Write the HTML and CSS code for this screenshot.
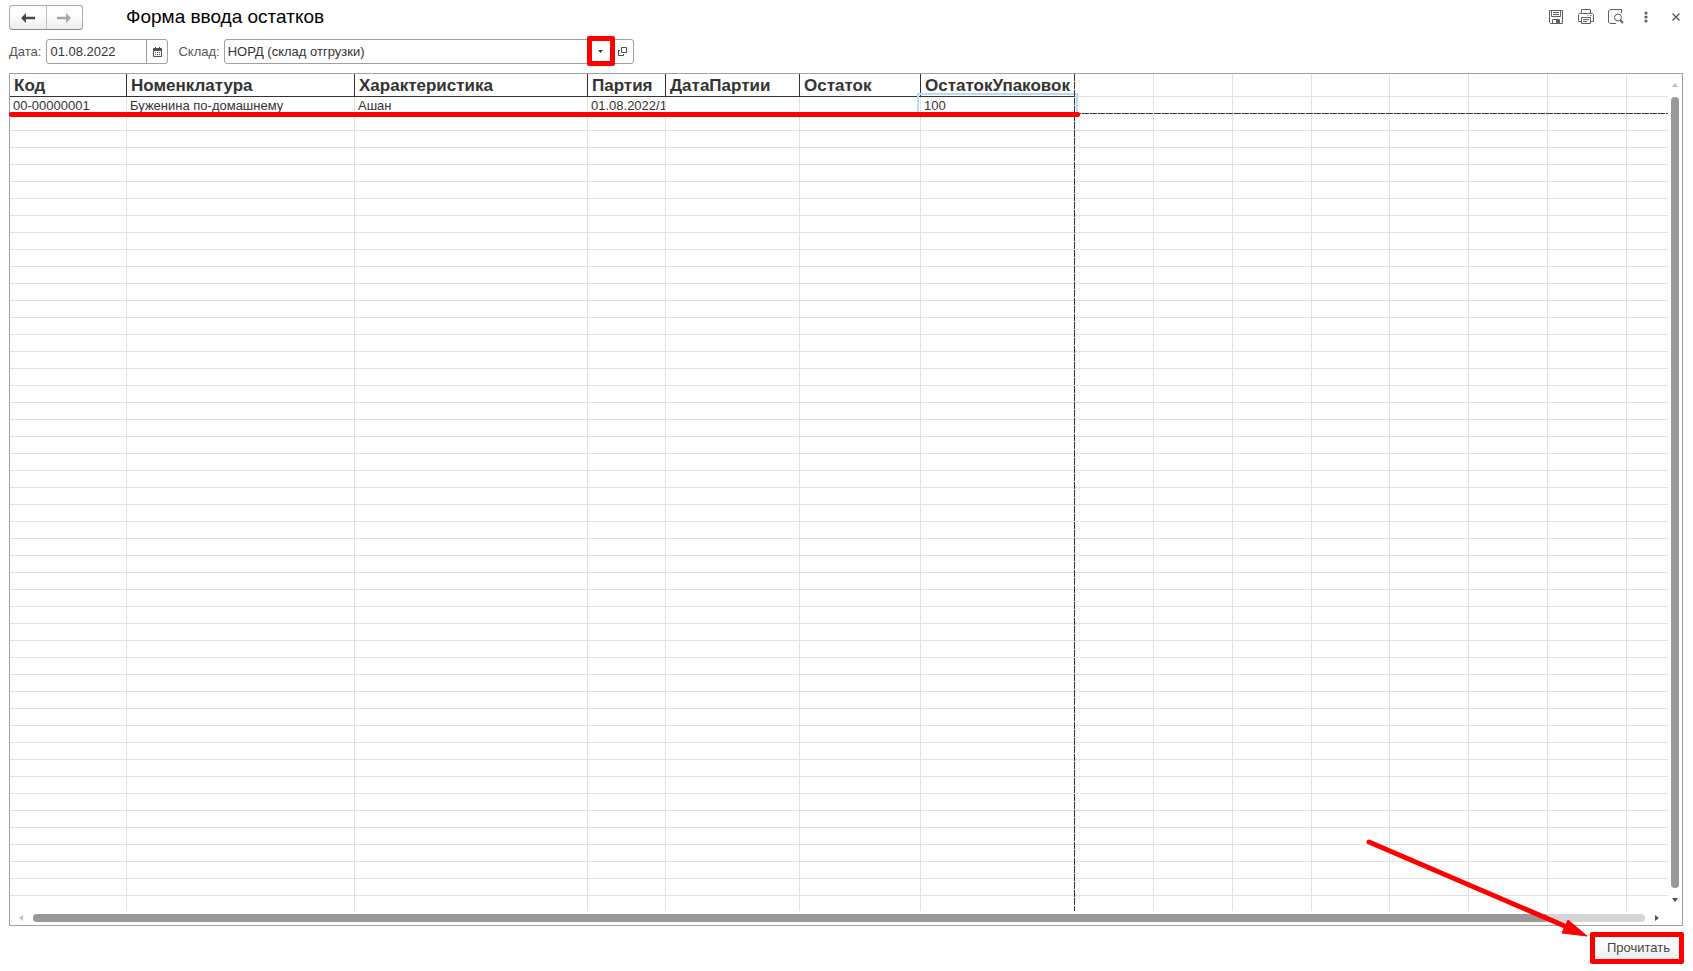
FILE: index.html
```html
<!DOCTYPE html>
<html lang="ru">
<head>
<meta charset="utf-8">
<title>Форма ввода остатков</title>
<link rel="stylesheet" href="styles.css">
</head>
<body>
<header class="titlebar">
  <div class="nav">
    <button class="nav-btn" type="button" aria-label="Назад"><svg width="14" height="10" viewBox="0 0 14 10"><path d="M0 5L5 0V3.800H14V6.200H5V10Z" fill="#484848"/></svg></button>
    <button class="nav-btn" type="button" aria-label="Вперёд"><svg width="14" height="10" viewBox="0 0 14 10"><path d="M14 5L9 0V3.800H0V6.200H9V10Z" fill="#a6a6a6"/></svg></button>
  </div>
  <h1 class="title">Форма ввода остатков</h1>
  <div class="tools">
    <button class="tool" type="button" aria-label="Сохранить"><svg width="16" height="16" viewBox="0 0 16 16" fill="none" stroke="#606060"><path d="M1.500 1.500H14.500V14.500H2.500L1.500 13.500ZM3.500 1.500V7.500H12.500V1.500M5 3.500H11M5 5.500H11M4.500 14.500V10.500H11.500V14.500"/><path d="M8 11H11V14H8Z" fill="#606060" stroke="none"/></svg></button>
    <button class="tool" type="button" aria-label="Печать"><svg width="16" height="16" viewBox="0 0 16 16" fill="none" stroke="#606060"><path d="M3.500 4.500V0.500H12.500V4.500M3.500 12.500H0.500V5.500L1.500 4.500H14.500L15.500 5.500V12.500H12.500M3.500 8.500H12.500V14.500H3.500ZM5 10.500H11M5 12.500H9M9.500 6.500H10.500M12 6.500H13.500"/></svg></button>
    <button class="tool" type="button" aria-label="Просмотр"><svg width="16" height="16" viewBox="0 0 16 16" fill="none" stroke="#606060"><path d="M8 14.500H2L0.500 13V2L2 0.500H13.500V4"/><circle cx="10" cy="8.500" r="3.500"/><path d="M12 11L15 14" stroke-width="2"/></svg></button>
    <button class="tool" type="button" aria-label="Ещё"><svg width="16" height="16" viewBox="0 0 16 16" fill="#606060"><circle cx="8" cy="4" r="1.600"/><circle cx="8" cy="8" r="1.600"/><circle cx="8" cy="12" r="1.600"/></svg></button>
    <button class="tool" type="button" aria-label="Закрыть"><svg width="16" height="16" viewBox="0 0 16 16" fill="none" stroke="#505050"><path d="M4.500 4.500L11.500 11.500M11.500 4.500L4.500 11.500" stroke-width="1.200"/></svg></button>
  </div>
</header>

<form class="params">
  <label class="label" for="date">Дата:</label>
  <div class="field date">
    <input id="date" type="text" value="01.08.2022">
    <button class="field-btn divided" type="button" aria-label="Календарь"><svg width="9" height="10" viewBox="0 0 9 10"><path d="M0.500 1.500H8.500V9.500H0.500Z" fill="none" stroke="#505050"/><path d="M1 1H8V4H1ZM2 0H3V1H2ZM6 0H7V1H6Z" fill="#505050"/><path d="M2 5.500H7M2 7.500H7" stroke="#505050" stroke-dasharray="1 1"/></svg></button>
  </div>
  <label class="label" for="store">Склад:</label>
  <div class="field store">
    <input id="store" type="text" value="НОРД (склад отгрузки)">
    <button class="field-btn marked" type="button" aria-label="Выбрать"><svg width="5" height="3" viewBox="0 0 5 3"><path d="M0 0H5L2.500 3Z" fill="#404040"/></svg></button>
    <button class="field-btn" type="button" aria-label="Открыть"><svg width="9" height="9" viewBox="0 0 9 9" fill="none" stroke="#505050"><path d="M3.500 0.500H8.500V5.500H3.500ZM2 3.500H0.500V8.500H5.500V7"/></svg></button>
  </div>
</form>

<main class="sheet">
  <div class="grid">
    <table class="cells">
      <colgroup>
        <col class="w-code"><col class="w-item"><col class="w-feature"><col class="w-lot"><col class="w-lotdate"><col class="w-rest"><col class="w-packs">
        <col class="w-blank"><col class="w-blank"><col class="w-blank"><col class="w-lot"><col class="w-blank"><col class="w-blank"><col class="w-blank"><col>
      </colgroup>
      <thead>
        <tr><th>Код</th><th>Номенклатура</th><th>Характеристика</th><th>Партия</th><th>ДатаПартии</th><th>Остаток</th><th>ОстатокУпаковок</th><td></td><td></td><td></td><td></td><td></td><td></td><td></td><td></td></tr>
      </thead>
      <tbody id="rows">
        <tr class="first"><td>00-00000001</td><td>Буженина по-домашнему</td><td>Ашан</td><td>01.08.2022/1</td><td></td><td></td><td>100</td><td></td><td></td><td></td><td></td><td></td><td></td><td></td><td></td></tr>
      </tbody>
    </table>
    <div class="current"></div>
    <div class="edge-v"></div>
    <div class="edge-h"></div>
  </div>
  <div class="vbar">
    <svg width="6" height="4" viewBox="0 0 6 4"><path d="M0 4L3 0L6 4Z" fill="#c0c0c0"/></svg>
    <div class="vthumb"></div>
    <svg width="6" height="4" viewBox="0 0 6 4"><path d="M0 0H6L3 4Z" fill="#505050"/></svg>
  </div>
  <div class="hbar">
    <svg width="4" height="6" viewBox="0 0 4 6"><path d="M4 0V6L0 3Z" fill="#c0c0c0"/></svg>
    <div class="htrack"><div class="hthumb"></div></div>
    <svg width="4" height="6" viewBox="0 0 4 6"><path d="M0 0V6L4 3Z" fill="#505050"/></svg>
  </div>
  <div class="underline"></div>
</main>

<footer class="footer">
  <button class="read" type="button">Прочитать</button>
  <svg class="arrow" width="224" height="104" viewBox="0 0 224 104"><path d="M5 8L203 93" stroke="#f00" stroke-width="5" stroke-linecap="round"/><path d="M204 86L223 102L198 99Z" fill="#f00" stroke="#f00"/></svg>
</footer>
<script src="grid.js"></script>
</body>
</html>
```

FILE: styles.css
```css
* { box-sizing: border-box; }

body {
  margin: 0;
  height: 100vh;
  min-height: 400px;
  display: flex;
  flex-direction: column;
  padding: 5px 10px 0 9px;
  background: #fff;
  color: #333;
  font: 13px/16px "Liberation Sans", Arial, sans-serif;
}

button, input { font: inherit; color: inherit; }
button { border: 0; padding: 0; background: none; }
svg { display: block; }

.titlebar { display: flex; align-items: flex-start; height: 25px; }
.nav {
  display: flex;
  width: 74px;
  height: 25px;
  border: 1px solid #aaa;
  border-bottom-color: #8c8c8c;
  border-radius: 3px;
  background: linear-gradient(#fff 40%, #ebebeb);
}
.nav-btn { flex: 1; display: flex; align-items: center; justify-content: center; }
.nav-btn + .nav-btn { border-left: 1px solid #c0c0c0; }
.title { flex: 1; margin: 0 0 0 43px; font-size: 19px; line-height: 24px; font-weight: 400; color: #000; }
.tools { display: flex; gap: 14px; padding-top: 4px; margin-right: -1px; }
.tool { width: 16px; height: 16px; }

.params { display: flex; align-items: center; height: 25px; margin: 9px 0; }
.label { color: #555; }
.field { display: flex; height: 25px; border: 1px solid #a0a0a0; border-radius: 3px; }
.field input { flex: 1; min-width: 0; border: 0; padding: 0 3px; background: none; outline: 0; }
.date { width: 122px; margin: 0 10px 0 5px; }
.store { width: 410px; margin-left: 4px; }
.field-btn { width: 20px; display: flex; align-items: center; justify-content: center; }
.divided { width: 21px; border-left: 1px solid #a0a0a0; }
.marked { width: 28px; height: 30px; margin: -4px -2px 0 0; border: 5px solid #f00; border-radius: 2px; }

.sheet {
  position: relative;
  flex: 1;
  display: grid;
  grid-template: minmax(0, 1fr) 14px / minmax(0, 1fr) 14px;
  border: 1px solid #a0a0a0;
}
.grid { position: relative; overflow: hidden; contain: size; }
.cells { width: 100%; table-layout: fixed; border-collapse: separate; border-spacing: 0; }
.cells th, .cells td {
  padding: 2px 3px 0;
  border-right: 1px solid #e2e2e2;
  border-bottom: 1px solid #e2e2e2;
  text-align: left;
  white-space: nowrap;
  overflow: hidden;
}
.cells td { height: 17px; line-height: 14px; }
.cells th, .cells thead td { height: 23px; }
.cells th { padding: 2px 4px 0; font-size: 17px; line-height: 20px; border-color: #333; }
.cells td:last-child { border-right: 0; }
.cells .first td { padding-right: 0; }
.w-code { width: 117px; }
.w-item { width: 228px; }
.w-feature { width: 233px; }
.w-lot { width: 78px; }
.w-lotdate { width: 134px; }
.w-rest { width: 121px; }
.w-packs { width: 154px; }
.w-blank { width: 79px; }

/* frame round the selected cell */
.current {
  position: absolute;
  left: 907px;
  top: 19px;
  width: 161px;
  height: 22px;
  border: 2px solid #b8dcf8;
}

/* print area edges */
.edge-v {
  position: absolute;
  top: 0;
  bottom: 0;
  left: 1064px;
  width: 1px;
  background: repeating-linear-gradient(#333 0 7px, #fff 7px 8px);
}
.edge-h {
  position: absolute;
  top: 39px;
  left: 1064px;
  right: 0;
  height: 1px;
  background: repeating-linear-gradient(90deg, #333 0 7px, #fff 7px 8px);
}

.vbar { display: flex; flex-direction: column; align-items: center; gap: 10px; padding: 9px 0; }
.vthumb { flex: 1; width: 8px; border-radius: 4px; background: #999; }
.hbar { grid-column: 1 / -1; display: flex; align-items: center; gap: 10px; padding: 0 23px 0 9px; }
.htrack { flex: 1; height: 8px; border-radius: 4px; background: #d6d6d6; }
.hthumb { width: 94%; height: 8px; border-radius: 4px; background: #999; }

.underline {
  position: absolute;
  left: -1px;
  top: 38px;
  width: 1071px;
  height: 5px;
  border-radius: 2px;
  background: #f00;
}

.footer { position: relative; display: flex; justify-content: flex-end; padding: 6px 0 7px; }
.read {
  width: 94px;
  height: 32px;
  margin-right: -1px;
  padding-left: 3px;
  border: 5px solid #f00;
  border-radius: 2px;
  background: linear-gradient(#fff 40%, #ebebeb);
  color: #444;
}
.arrow { position: absolute; right: 95px; bottom: 33px; }
```

FILE: grid.js
```javascript
const rows = document.getElementById("rows");
const columns = 15;
for (let i = 0; i < 47; i++) {
  const row = rows.insertRow();
  for (let c = 0; c < columns; c++) row.insertCell();
}
```
